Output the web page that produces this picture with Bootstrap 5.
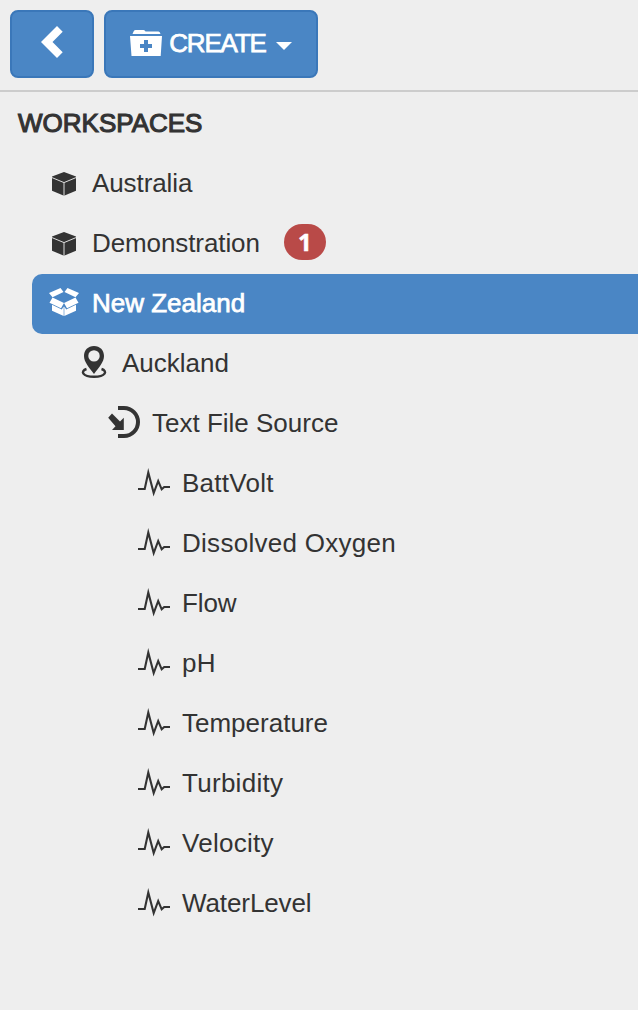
<!DOCTYPE html>
<html lang="en">
<head>
<meta charset="utf-8">
<meta name="viewport" content="width=device-width, initial-scale=1">
<title>Workspaces</title>
<link href="https://cdn.jsdelivr.net/npm/bootstrap@5.3.0/dist/css/bootstrap.min.css" rel="stylesheet">
<style>
body{background:#eee;color:#333;font-family:"Liberation Sans",Arial,sans-serif;font-size:26px;line-height:30px;overflow:hidden}
.toolbar{height:92px;padding:10px;border-bottom:2px solid #ccc;gap:10px}
.btn-tool{--bs-btn-color:#fff;--bs-btn-bg:#4a86c5;--bs-btn-border-color:#3a77b9;--bs-btn-hover-color:#fff;--bs-btn-hover-bg:#3f7ab8;--bs-btn-hover-border-color:#3a77b9;height:68px;border-width:2px;border-radius:8px;font-size:26px;line-height:30px;padding:0}
.btn-back{width:84px}
.btn-create{width:214px}
.btn-create::after{content:none}
.faux{-webkit-text-stroke:.75px currentColor}
.create-text{letter-spacing:-1.15px;margin:-3px 0 0 7px}
.heading{font-size:26px;line-height:30px;margin:0;padding:16px 0 16px 18px;-webkit-text-stroke:1.1px currentColor;letter-spacing:0;font-weight:400}
.tree-row{height:60px;padding-bottom:2px}
.tree-row svg{width:32px;height:32px;margin:2px 12px 0 0;overflow:visible;flex:none}
.lv1{margin-left:32px;padding-left:16px}
.lv2{padding-left:78px}
.lv3{padding-left:108px}
.lv4{padding-left:138px}
.tight{letter-spacing:-.1px}
.loose{letter-spacing:.28px}
.selected{background:#4a86c5;color:#fff;border-radius:10px 0 0 10px}
.count{width:42px;height:36px;margin-left:24px;border-radius:18px;background:#b94a48;color:#fff;font:700 24px/36px "Open Sans",sans-serif;padding:0;margin-top:-2px;-webkit-text-stroke:.5px #fff}
</style>
</head>
<body>
<svg class="d-none" aria-hidden="true">
<symbol id="cube" viewBox="0 0 32 32"><path fill="currentColor" d="M16 4 28 8.6V22.8L16 27.7 4 22.8V8.6Z"/><path fill="none" stroke="#ddd" stroke-width="1" d="M4 9.6 16 14.6 28 9.6M16 14.6V28"/></symbol>
<symbol id="pulse" viewBox="0 0 32 32"><path fill="none" stroke="currentColor" stroke-width="2.100" stroke-miterlimit="8" d="M0 21H6.7L10.3 4.500 15.7 25 20.2 13 23.7 21.3 26.2 19H32"/></symbol>
</svg>
<header class="toolbar d-flex">
  <button class="btn btn-tool btn-back d-flex align-items-center justify-content-center" aria-label="Back">
    <svg width="24" height="32" viewBox="0 0 24 32" style="margin:-4px 2px 0 0"><path fill="#fff" d="M18 0 23.700 5.700 13.500 16 23.700 26.300 18 32 2 16Z"/></svg>
  </button>
  <button class="btn btn-tool btn-create dropdown-toggle d-flex align-items-center justify-content-center">
    <svg width="32" height="26" viewBox="0 0 32 26" style="margin-top:-2px"><path fill="#fff" d="M2.500 4 3.700 1.200Q4.300 0 5.700 0H13.500Q15 0 15.500 1.500H28.500Q30 1.500 30.500 4ZM0 6H32L30.700 26H1.500Z"/><path fill="#4a86c5" d="M14 10H18V14H22V18H18V22H14V18H10V14H14Z"/></svg>
    <span class="create-text faux">CREATE</span>
    <svg width="16" height="8" viewBox="0 0 16 8" style="margin:4px 0 0 10px"><path fill="#fff" d="M0 0H16L8 8Z"/></svg>
  </button>
</header>
<main>
  <h1 class="heading">WORKSPACES</h1>
  <nav class="d-flex flex-column">
    <div class="tree-row lv1 d-flex align-items-center"><svg><use href="#cube"/></svg><span class="tight">Australia</span></div>
    <div class="tree-row lv1 d-flex align-items-center"><svg><use href="#cube"/></svg><span class="tight">Demonstration</span><span class="badge count">1</span></div>
    <div class="tree-row lv1 selected d-flex align-items-center">
      <svg viewBox="0 0 32 32"><g fill="currentColor"><path d="M12.500 0 15.500 4 4.500 9.200 1 5ZM19.500 0 16.500 4 27.500 9.200 31 5Z"/><path d="M4.500 9.600 16 15 13 20.300 1.500 14.700ZM27.500 9.600 16 15 19 20.300 30.500 14.700Z"/><path d="M4 16.800 13.800 21.500 15.700 18.500V28L4 22.800ZM28 16.800 18.200 21.500 16.300 18.500V28L28 22.800Z"/></g></svg>
      <span class="faux">New Zealand</span></div>
    <div class="tree-row lv2 d-flex align-items-center">
      <svg viewBox="0 0 32 32"><path fill="currentColor" fill-rule="evenodd" d="M16-2C10-2 6 2.300 6 8 6 14 11 19.500 16 26 21 19.500 26 14 26 8 26 2.300 22-2 16-2ZM16 2.200A5.700 5.700 0 1 1 16 13.600 5.700 5.700 0 1 1 16 2.200Z"/><path fill="none" stroke="currentColor" stroke-width="2.400" d="M8.500 21C2 23 4.300 28.800 16 28.800S30 23 23.500 21"/></svg>
      <span>Auckland</span></div>
    <div class="tree-row lv3 d-flex align-items-center">
      <svg viewBox="0 0 32 32"><path fill="none" stroke="currentColor" stroke-width="4" d="M10 0H16A14 14 0 0 1 16 28H10"/><path fill="currentColor" d="M4 5.500 12 13.500 15.800 9.800V22H4L7.500 18.200 .2 9.800Z"/></svg>
      <span>Text File Source</span></div>
    <div class="tree-row lv4 d-flex align-items-center"><svg><use href="#pulse"/></svg><span class="loose">BattVolt</span></div>
    <div class="tree-row lv4 d-flex align-items-center"><svg><use href="#pulse"/></svg><span class="loose">Dissolved Oxygen</span></div>
    <div class="tree-row lv4 d-flex align-items-center"><svg><use href="#pulse"/></svg><span class="tight">Flow</span></div>
    <div class="tree-row lv4 d-flex align-items-center"><svg><use href="#pulse"/></svg><span class="loose">pH</span></div>
    <div class="tree-row lv4 d-flex align-items-center"><svg><use href="#pulse"/></svg><span>Temperature</span></div>
    <div class="tree-row lv4 d-flex align-items-center"><svg><use href="#pulse"/></svg><span class="loose">Turbidity</span></div>
    <div class="tree-row lv4 d-flex align-items-center"><svg><use href="#pulse"/></svg><span class="loose">Velocity</span></div>
    <div class="tree-row lv4 d-flex align-items-center"><svg><use href="#pulse"/></svg><span class="tight">WaterLevel</span></div>
  </nav>
</main>
<script src="https://cdn.jsdelivr.net/npm/bootstrap@5.3.0/dist/js/bootstrap.bundle.min.js"></script>
</body>
</html>
